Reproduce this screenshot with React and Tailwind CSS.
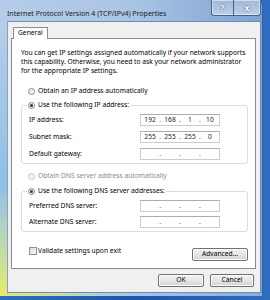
import React from 'react';

const font = "font-['Segoe_UI','Noto_Sans',sans-serif]";

function Radio({ checked, disabled }) {
  return (
    <span
      className={`relative inline-flex items-center justify-center w-[7px] h-[7px] rounded-full border shrink-0 ${
        disabled ? 'border-[#c4c4c4] bg-[#f4f4f4]' : 'border-[#8a8a8a] bg-gradient-to-br from-[#e6e6e6] to-[#fafafa]'
      }`}
    >
      {checked && <span className="w-[3px] h-[3px] rounded-full bg-[#1d3b5c]" />}
    </span>
  );
}

function IpField({ value }) {
  const parts = value || ['', '', '', ''];
  return (
    <div className="w-[80px] h-[12px] border border-[#c9ccd2] border-t-[#abadb3] bg-white flex items-center text-[#222]">
      {parts.map((p, i) => (
        <React.Fragment key={i}>
          <span className="flex-1 text-center leading-[10px]">{p}</span>
          {i < 3 && <span className="text-[#555] leading-[10px]">.</span>}
        </React.Fragment>
      ))}
    </div>
  );
}

function Button({ children, className = '' }) {
  return (
    <div
      className={`h-[13px] flex items-center justify-center rounded-[2px] border border-[#707070] bg-gradient-to-b from-[#f2f2f2] via-[#e6e6e6] to-[#d2d2d2] shadow-[inset_0_0_0_1px_#fcfcfc] ${className}`}
    >
      {children}
    </div>
  );
}

function Row({ label, value }) {
  return (
    <div className="grid grid-cols-[111px_80px] items-center h-[12px]">
      <span>{label}</span>
      <IpField value={value} />
    </div>
  );
}

export default function App() {
  return (
    <div className={`w-[270px] h-[300px] overflow-hidden bg-gradient-to-r from-[#2d6fc0] via-[#1d56a8] to-[#2e6ec2] text-[6.7px] text-black ${font}`}>
      <div className="w-[263px] h-[296px] flex flex-col bg-gradient-to-r from-[#b5cde8] via-[#aac4e4] to-[#7ea3d4] rounded-tr-[6px] border-r border-[#3b5f8f]">
        {/* title bar */}
        <div className="h-[21px] flex items-start">
          <div className="flex-1 pl-[7px] pt-[9px] leading-[9px] text-[7px] text-[#1b1b1b]">
            Internet Protocol Version 4 (TCP/IPv4) Properties
          </div>
          <div className="flex mr-[1px] h-[16px] border border-t-0 border-[#4a6385] rounded-b-[3px] bg-gradient-to-b from-[#9fb9da] to-[#bcd0e9] shadow-[inset_0_0_0_1px_rgba(255,255,255,0.5)]">
            <div className="w-[22px] flex items-center justify-center border-r border-[#4a6385] text-white font-bold text-[8px] [text-shadow:0_0_2px_#223]">?</div>
            <div className="w-[26px] flex items-center justify-center text-white font-bold text-[8px] [text-shadow:0_0_2px_#223]">x</div>
          </div>
        </div>
        <div className="flex-1 flex">
          <div className="w-[7px] bg-gradient-to-b from-[#b5cde8] via-[#8fc0e6] via-60% to-[#e6ea6a]" />
          {/* client area */}
          <div className="flex-1 flex flex-col bg-[#f0f0f0] border border-[#6d8db5] border-l-[#88a2c4] pl-[3px] pr-[4px] pt-[5px]">
            <div className="flex pl-[2px]">
              <div className="h-[12px] px-[4px] flex items-center bg-white border border-b-0 border-[#898c95] -mb-[1px] z-10 relative">
                General
              </div>
            </div>
            <div className="h-[231px] bg-white border border-[#898c95] pl-[9px] pr-[7px] pt-[9px] flex flex-col">
              <p className="leading-[9px]">
                You can get IP settings assigned automatically if your network supports this capability. Otherwise, you need to ask your network administrator for the appropriate IP settings.
              </p>
              <div className="mt-[12px] ml-[7px] h-[9px] flex items-center gap-[3px]">
                <Radio />
                <span>Obtain an IP address automatically</span>
              </div>
              <fieldset className="mt-[5px] border border-[#d5dfe5] rounded-[3px] px-[7px] pb-[3px]">
                <legend className="-ml-[2px] px-[1px] h-[9px] flex items-center gap-[3px]">
                  <Radio checked />
                  <span>Use the following IP address:</span>
                </legend>
                <div className="pt-[4px] flex flex-col gap-[5px]">
                  <Row label="IP address:" value={['192', '168', '1', '10']} />
                  <Row label="Subnet mask:" value={['255', '255', '255', '0']} />
                  <Row label="Default gateway:" />
                </div>
              </fieldset>
              <div className="mt-[8px] ml-[7px] h-[9px] flex items-center gap-[3px] text-[#8a8a8a]">
                <Radio disabled />
                <span>Obtain DNS server address automatically</span>
              </div>
              <fieldset className="mt-[6px] border border-[#d5dfe5] rounded-[3px] px-[7px] pb-[3px]">
                <legend className="-ml-[2px] px-[1px] h-[9px] flex items-center gap-[3px]">
                  <Radio checked />
                  <span>Use the following DNS server addresses:</span>
                </legend>
                <div className="pt-[4px] flex flex-col gap-[4px]">
                  <Row label="Preferred DNS server:" />
                  <Row label="Alternate DNS server:" />
                </div>
              </fieldset>
              <div className="mt-[15px] flex items-start justify-between">
                <div className="ml-[8px] flex items-center gap-[1px] h-[8px]">
                  <span className="w-[8px] h-[8px] border border-[#8e8f8f] bg-gradient-to-br from-[#dcdcdc] to-[#f8f8f8]" />
                  <span>Validate settings upon exit</span>
                </div>
                <Button className="w-[56px] h-[12px] mt-[1px]">Advanced...</Button>
              </div>
            </div>
            <div className="mt-[5px] flex justify-end gap-[6px] pr-[2px]">
              <Button className="w-[46px]">OK</Button>
              <Button className="w-[44px]">Cancel</Button>
            </div>
          </div>
          <div className="w-[1px]" />
        </div>
        <div className="h-[3px] bg-gradient-to-r from-[#e8e86a] via-[#a9c6e4] to-[#8aaed8]" />
      </div>
    </div>
  );
}
